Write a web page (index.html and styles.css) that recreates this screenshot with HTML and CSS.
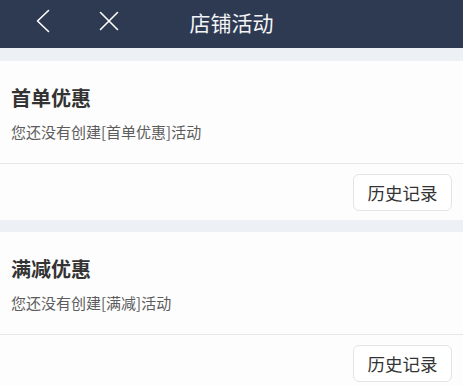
FILE: index.html
```html
<!DOCTYPE html>
<html lang="zh-CN">
<head>
<meta charset="utf-8">
<title>店铺活动</title>
<link rel="stylesheet" href="styles.css">
</head>
<body>
<header class="topbar">
  <div class="nav-left">
    <span class="nav-btn back">
      <svg width="14" height="24" viewBox="0 0 14 24"><polyline points="12.5,1.5 1.5,12 12.5,22.5" fill="none" stroke="#fff" stroke-width="1.6" stroke-linecap="round" stroke-linejoin="round"/></svg>
    </span>
    <span class="nav-btn close">
      <svg width="20" height="20" viewBox="0 0 20 20"><path d="M1.5 1.5 L18.5 18.5 M18.5 1.5 L1.5 18.5" fill="none" stroke="#fff" stroke-width="1.6" stroke-linecap="round"/></svg>
    </span>
  </div>
  <h1 class="title">店铺活动</h1>
</header>
<main class="list">
  <section class="card">
    <div class="card-body">
      <h2 class="card-title">首单优惠</h2>
      <p class="card-desc">您还没有创建[首单优惠]活动</p>
    </div>
    <div class="card-foot">
      <button class="history-btn">历史记录</button>
    </div>
  </section>
  <section class="card">
    <div class="card-body">
      <h2 class="card-title">满减优惠</h2>
      <p class="card-desc">您还没有创建[满减]活动</p>
    </div>
    <div class="card-foot">
      <button class="history-btn">历史记录</button>
    </div>
  </section>
</main>
</body>
</html>
```

FILE: styles.css
```css
* { box-sizing: border-box; }
html, body {
  margin: 0;
  padding: 0;
  background: #edf0f4;
  font-family: "Noto Sans CJK SC", "Noto Sans", sans-serif;
  color: #333;
}
.topbar {
  position: relative;
  height: 48px;
  background: #2e3a51;
  display: flex;
  align-items: center;
  justify-content: center;
}
.nav-left {
  position: absolute;
  left: 0;
  top: 0;
  height: 48px;
  display: flex;
  align-items: center;
}
.nav-btn { display: flex; align-items: center; }
.nav-btn svg { display: block; }
.back { margin-left: 36px; margin-top: -6px; }
.close { margin-left: 49px; margin-top: -6px; }
.title {
  margin: -4px 0 0 0;
  font-size: 21px;
  font-weight: 400;
  color: #f3f5f8;
  line-height: 28px;
}
.list {
  padding-top: 13px;
  display: flex;
  flex-direction: column;
  gap: 12px;
}
.card {
  background: #fdfdfd;
}
.card-body {
  padding: 23px 11px 21px;
  border-bottom: 1px solid #e6e7e9;
}
.card-title {
  margin: 0;
  font-size: 20px;
  line-height: 28px;
  font-weight: 700;
  color: #333;
}
.card-desc {
  margin: 10px 0 0;
  font-size: 15px;
  line-height: 20px;
  color: #5c5c5c;
}
.card-foot {
  display: flex;
  justify-content: flex-end;
  padding: 10px 11px 9px;
}
.history-btn {
  width: 99px;
  height: 37px;
  border: 1px solid #e3e4e6;
  border-radius: 6px;
  background: #fff;
  font-family: inherit;
  font-size: 17.5px;
  color: #333;
  padding: 0;
}
```
